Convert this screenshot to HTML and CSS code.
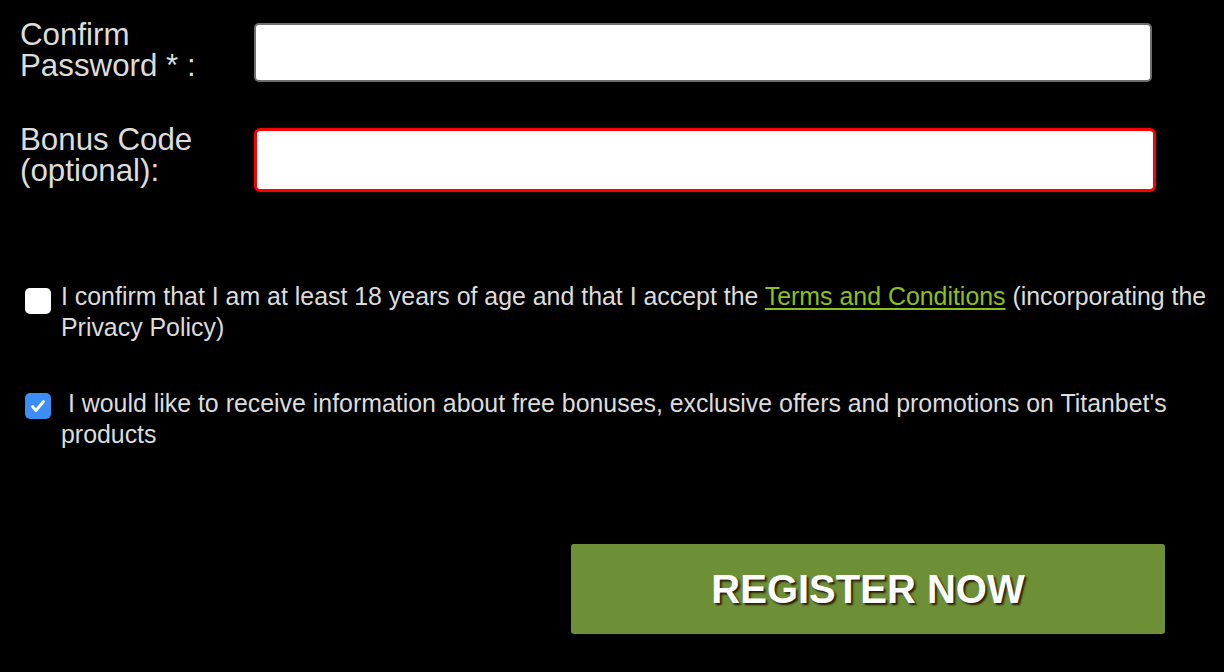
FILE: index.html
```html
<!DOCTYPE html>
<html lang="en">
<head>
<meta charset="utf-8">
<title>Register</title>
<link rel="stylesheet" href="styles.css">
</head>
<body>
<form class="form">
  <div class="field field-first">
    <label class="label" for="pw2">Confirm<br>Password * :</label>
    <input class="input" id="pw2" type="password">
  </div>
  <div class="field field-second">
    <label class="label" for="bonus">Bonus Code<br>(optional):</label>
    <input class="input input-error" id="bonus" type="text">
  </div>

  <div class="check check-first">
    <span class="box"></span>
    <p class="check-text">I confirm that I am at least 18 years of age and that I accept the <a class="link" href="#">Terms and Conditions</a> (incorporating the Privacy Policy)</p>
  </div>
  <div class="check check-second">
    <span class="box box-checked">
      <svg viewBox="0 0 26 26" width="26" height="26"><path d="M7.5 13.5 L11 17.5 L18.5 8.5" fill="none" stroke="#fff" stroke-width="2.8" stroke-linecap="round" stroke-linejoin="round"/></svg>
    </span>
    <p class="check-text">&nbsp;I would like to receive information about free bonuses, exclusive offers and promotions on Titanbet's products</p>
  </div>

  <div class="actions">
    <button class="register" type="button">REGISTER NOW</button>
  </div>
</form>
</body>
</html>
```
FILE: styles.css
```css
html, body {
  margin: 0;
  padding: 0;
  background: #000;
}
body {
  width: 1224px;
  height: 672px;
  overflow: hidden;
  font-family: "Liberation Sans", Arial, Helvetica, sans-serif;
  color: #dcdcdc;
}
.form {
  display: flex;
  flex-direction: column;
}
.field {
  display: flex;
  align-items: flex-start;
  padding-left: 20px;
}
.field-first {
  margin-top: 19px;
}
.field-second {
  margin-top: 42px;
}
.label {
  width: 234px;
  flex: none;
  font-size: 31.3px;
  line-height: 31px;
  color: #dcdcdc;
}
.input {
  box-sizing: border-box;
  margin: 4px 0 0 0;
  width: 898px;
  height: 59px;
  border: 2px solid #6e6e6e;
  border-radius: 5px;
  background: #fff;
  outline: none;
  font-size: 20px;
  padding: 0 12px;
}
.input-error {
  width: 902px;
  height: 64px;
  border: 3px solid #ff0000;
  border-radius: 6px;
}
.check {
  display: flex;
  align-items: flex-start;
  padding: 0 6px 0 25px;
  gap: 10px;
}
.check-first {
  margin-top: 89px;
}
.check-second {
  margin-top: 45px;
}
.box {
  flex: none;
  width: 26px;
  height: 26px;
  border-radius: 5px;
  background: #fff;
  margin-top: 7px;
  display: block;
}
.check-second .box {
  margin-top: 5px;
}
.box-checked {
  background: #3a8ef6;
}
.box svg {
  display: block;
}
.check-text {
  margin: 0;
  font-size: 24.9px;
  line-height: 31px;
  color: #dcdcdc;
}
.link {
  color: #8cc11c;
  text-decoration: underline;
  text-underline-offset: 3px;
}
.actions {
  display: flex;
  padding-left: 571px;
  margin-top: 94px;
}
.register {
  width: 594px;
  height: 90px;
  border: none;
  border-radius: 3px;
  background: #6d8f35;
  color: #fff;
  font-family: "Liberation Sans", Arial, sans-serif;
  font-weight: bold;
  font-size: 40px;
  text-shadow: 2px 2px 2px #2b1d08;
  cursor: pointer;
  padding: 0;
}
```
